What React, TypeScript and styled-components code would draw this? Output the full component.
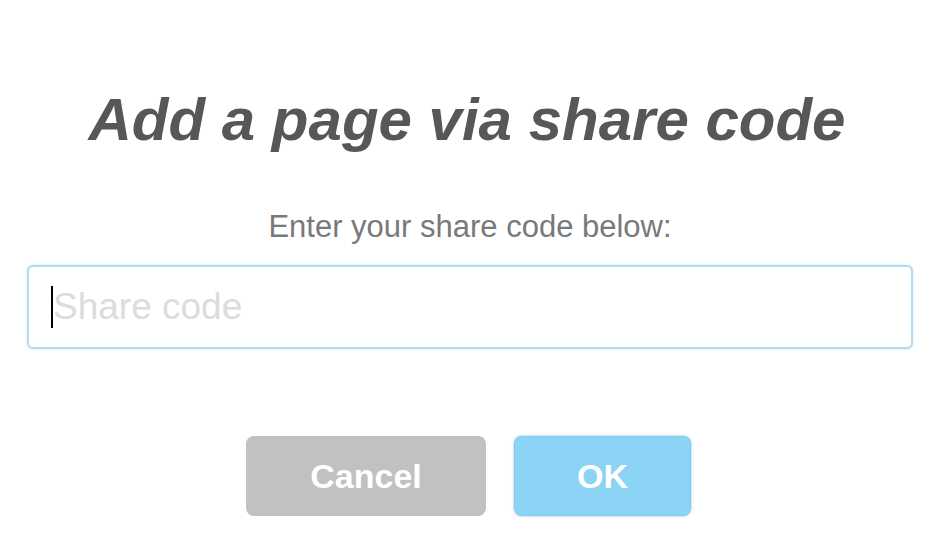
import React from 'react';
import styled, { createGlobalStyle } from 'styled-components';

const GlobalStyle = createGlobalStyle`
  html, body {
    margin: 0;
    padding: 0;
    background: #ffffff;
  }
  body {
    font-family: 'Liberation Sans', Arial, sans-serif;
  }
`;

const Dialog = styled.div`
  width: 940px;
  height: 542px;
  box-sizing: border-box;
  padding: 85px 27px 0;
  display: flex;
  flex-direction: column;
  align-items: center;
  background: #ffffff;
`;

const Title = styled.h2`
  margin: 0 6px 0 0;
  font-size: 60px;
  line-height: 70px;
  font-weight: 700;
  font-style: italic;
  color: #575757;
`;

const Message = styled.p`
  margin: 54px 0 0;
  font-size: 31px;
  line-height: 36px;
  color: #797979;
`;

const Field = styled.div`
  position: relative;
  width: 100%;
  margin-top: 20px;
`;

const Input = styled.input`
  display: block;
  width: 100%;
  height: 84px;
  box-sizing: border-box;
  padding: 0 24px;
  border: 2px solid #b4dbed;
  border-radius: 6px;
  box-shadow: 0 0 3px #c4e6f5;
  font-family: 'Liberation Sans', Arial, sans-serif;
  font-size: 37px;
  color: #575757;
  outline: none;
  caret-color: transparent;
  &::placeholder {
    color: #dcdcdc;
  }
`;

const Caret = styled.span`
  position: absolute;
  left: 24px;
  top: 21px;
  width: 2px;
  height: 42px;
  background: #000000;
`;

const Actions = styled.div`
  display: flex;
  gap: 28px;
  margin: 87px 3px 0 0;
`;

const Button = styled.button<{ $tone: 'cancel' | 'ok' }>`
  width: ${(p) => (p.$tone === 'ok' ? '177px' : '240px')};
  height: 80px;
  padding: 0;
  border: none;
  border-radius: 8px;
  font-family: 'Liberation Sans', Arial, sans-serif;
  font-size: 34px;
  font-weight: 700;
  color: #ffffff;
  cursor: pointer;
  background: ${(p) => (p.$tone === 'ok' ? '#8cd4f5' : '#c1c1c1')};
  box-shadow: ${(p) =>
    p.$tone === 'ok'
      ? '0 0 3px rgba(128, 179, 235, 0.8), inset 0 0 0 1px rgba(0, 0, 0, 0.05)'
      : 'none'};
`;

const App = () => {
  return (
    <>
      <GlobalStyle />
      <Dialog>
        <Title>Add a page via share code</Title>
        <Message>Enter your share code below:</Message>
        <Field>
          <Input type="text" placeholder="Share code" />
          <Caret />
        </Field>
        <Actions>
          <Button $tone="cancel">Cancel</Button>
          <Button $tone="ok">OK</Button>
        </Actions>
      </Dialog>
    </>
  );
};

export default App;
